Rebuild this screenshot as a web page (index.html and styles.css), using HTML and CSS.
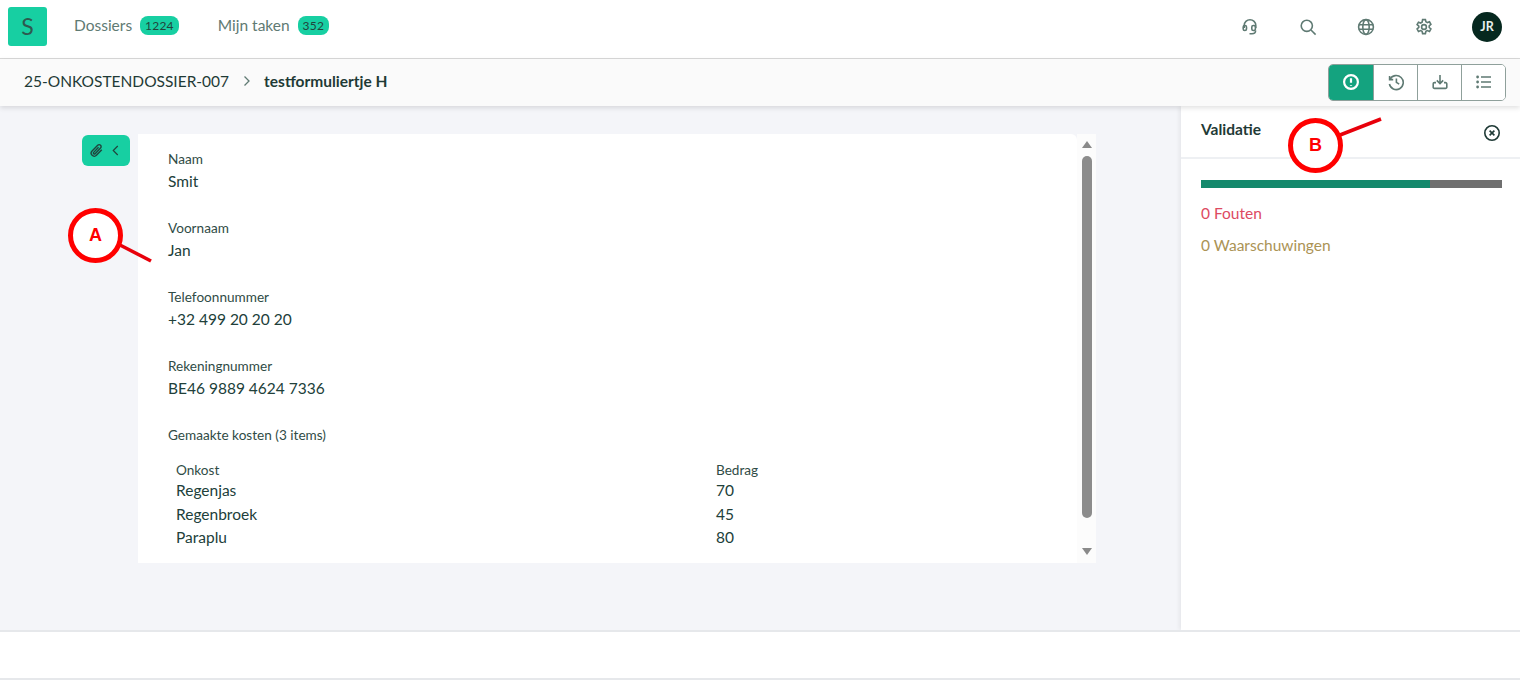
FILE: index.html
```html
<!DOCTYPE html>
<html lang="nl">
<head>
<meta charset="utf-8">
<title>testformuliertje H</title>
<link rel="stylesheet" href="styles.css">
</head>
<body>
<div class="app">
  <header class="topbar">
    <div class="logo">S</div>
    <nav class="nav">
      <a class="nav-item">Dossiers <span class="badge">1224</span></a>
      <a class="nav-item">Mijn taken <span class="badge">352</span></a>
    </nav>
    <div class="top-icons">
      <svg class="ticon" viewBox="0 0 18 18"><path d="M3.2 10V7.5a5.8 5.8 0 0 1 11.6 0V10"/><rect x="2.2" y="7.5" width="3.3" height="5" rx="1.6"/><rect x="10.8" y="7.5" width="3.6" height="5" rx="1.6"/><path d="M14.6 12.5c0 2.2-1.5 3.3-3.6 3.3H8.5"/></svg>
      <svg class="ticon" viewBox="0 0 18 18"><circle cx="7.8" cy="7.8" r="5.6"/><path d="M12 12l4.6 4.6"/></svg>
      <svg class="ticon" viewBox="0 0 18 18"><circle cx="9" cy="9" r="7.4"/><ellipse cx="9" cy="9" rx="3.2" ry="7.4"/><path d="M1.8 6.7h14.4M1.8 11.3h14.4"/></svg>
      <svg class="ticon" viewBox="0 0 18 18"><circle cx="9" cy="9" r="2.4"/><path d="M7.6 1.6h2.8l.5 2.2 1.5.8 2.1-.8 1.4 2.5-1.7 1.5v1.6l1.7 1.5-1.4 2.5-2.1-.8-1.5.8-.5 2.2H7.6l-.5-2.2-1.5-.8-2.1.8-1.4-2.5 1.7-1.5V8.2L2.1 6.7l1.4-2.5 2.1.8 1.5-.8z"/></svg>
      <div class="avatar">JR</div>
    </div>
  </header>

  <div class="subbar">
    <div class="crumbs">
      <span>25-ONKOSTENDOSSIER-007</span>
      <svg class="crumb-sep" viewBox="0 0 10 12"><path d="M2.5 1.5L7 6l-4.5 4.5"/></svg>
      <strong>testformuliertje H</strong>
    </div>
    <div class="tools">
      <button class="tool active"><svg viewBox="0 0 18 18"><circle cx="9" cy="9" r="6.9"/><path d="M9 5.2v4.6M9 12.1v.6"/></svg></button>
      <button class="tool"><svg viewBox="0 0 18 18"><path d="M2.6 3v3.6h3.6"/><path d="M3 6.4A7 7 0 1 1 2.4 11"/><path d="M9.4 5.4v4l2.8 1.7"/></svg></button>
      <button class="tool"><svg viewBox="0 0 18 18"><path d="M9 2v8.4M5.8 7.4L9 10.6l3.2-3.2"/><path d="M5 9.6H3.4a1.2 1.2 0 0 0-1.2 1.2v3.4a1.2 1.2 0 0 0 1.2 1.2h11.2a1.2 1.2 0 0 0 1.2-1.2v-3.4a1.2 1.2 0 0 0-1.2-1.2H13"/></svg></button>
      <button class="tool"><svg viewBox="0 0 18 18"><path d="M6 4h10M6 9h10M6 14h10"/><circle class="dot" cx="2.6" cy="4" r="1.4"/><circle class="dot" cx="2.6" cy="9" r="1.4"/><circle class="dot" cx="2.6" cy="14" r="1.4"/></svg></button>
    </div>
  </div>

  <div class="workspace">
    <main class="canvas">
      <button class="attach">
        <svg viewBox="0 0 16 16" class="clip"><path d="M13.6 7.2l-5.7 5.9a3.2 3.2 0 0 1-4.6-4.5l6-6.2a2.1 2.1 0 0 1 3 3l-5.8 6a1 1 0 0 1-1.5-1.4l5.2-5.4"/></svg>
        <svg viewBox="0 0 10 14" class="chev"><path d="M7.5 2L2.5 7l5 5"/></svg>
      </button>
      <div class="sheet">
        <div class="form">
          <div class="field"><div class="label">Naam</div><div class="value">Smit</div></div>
          <div class="field"><div class="label">Voornaam</div><div class="value">Jan</div></div>
          <div class="field"><div class="label">Telefoonnummer</div><div class="value">+32 499 20 20 20</div></div>
          <div class="field"><div class="label">Rekeningnummer</div><div class="value">BE46 9889 4624 7336</div></div>
          <div class="label group-label">Gemaakte kosten (3 items)</div>
          <div class="costs">
            <div class="label">Onkost</div><div class="label">Bedrag</div>
            <div class="value">Regenjas</div><div class="value">70</div>
            <div class="value">Regenbroek</div><div class="value">45</div>
            <div class="value">Paraplu</div><div class="value">80</div>
          </div>
        </div>
        <div class="scrollbar">
          <span class="arrow up"></span>
          <span class="thumb"></span>
          <span class="arrow down"></span>
        </div>
      </div>
    </main>
    <aside class="panel">
      <div class="panel-head">
        <h2>Validatie</h2>
        <svg class="close" viewBox="0 0 18 18"><circle cx="9" cy="9" r="7.2"/><path d="M6.6 6.6l4.8 4.8M11.4 6.6l-4.8 4.8"/></svg>
      </div>
      <div class="panel-body">
        <div class="progress"><div class="progress-fill"></div></div>
        <div class="errors">0 Fouten</div>
        <div class="warnings">0 Waarschuwingen</div>
      </div>
    </aside>
  </div>
  <footer class="footer"></footer>

  <div class="callout callout-a">A</div>
  <div class="callout callout-b">B</div>
  <svg class="callout-lines" viewBox="0 0 1520 680">
    <path d="M120 245L151 261"/>
    <path d="M1340 135L1381 119"/>
  </svg>
</div>
</body>
</html>
```

FILE: styles.css
```css
* { box-sizing: border-box; }
html, body { margin: 0; height: 100%; }
body { font-family: Lato, "Liberation Sans", sans-serif; color: #1f3a36; background: #fff; overflow: hidden; }

.app { position: relative; width: 1520px; height: 680px; display: flex; flex-direction: column; }

.topbar { height: 59px; flex: none; display: flex; align-items: center; padding: 0 18px 6px 8px; border-bottom: 1px solid #d9d9d9; background: #fff; }
.logo { width: 39px; height: 39px; background: #17cfa2; border-radius: 3px; display: flex; align-items: center; justify-content: center; font-size: 23px; color: #2d5a4f; }
.nav { display: flex; gap: 39px; margin: 0 0 2px 27px; }
.nav-item { display: flex; align-items: center; gap: 8px; font-size: 15.5px; color: #5f7a73; }
.badge { background: #17cfa2; color: #21443c; font-size: 12px; height: 19px; border-radius: 8px; padding: 0 5px; display: flex; align-items: center; letter-spacing: .2px; margin-top: 1px; }
.top-icons { margin-left: auto; display: flex; align-items: center; margin-top: 1px; }
.ticon { width: 18px; height: 18px; margin-right: 40px; fill: none; stroke: #5f7a73; stroke-width: 1.6; }
.avatar { width: 30px; height: 30px; border-radius: 50%; background: #06281f; color: #e8efed; font-size: 12.5px; font-weight: 700; display: flex; align-items: center; justify-content: center; margin-left: -1px; }

.subbar { height: 47px; flex: none; display: flex; align-items: center; justify-content: space-between; padding: 0 14px 1px 24px; background: #fafafa; box-shadow: 0 2px 5px rgba(0,0,0,.12); position: relative; z-index: 2; }
.crumbs { display: flex; align-items: center; font-size: 15.5px; color: #1f3a36; margin-bottom: 2px; }
.crumbs strong { font-weight: 700; font-size: 15.5px; }
.crumb-sep { width: 10px; height: 12px; margin: 0 12px 0 13px; fill: none; stroke: #5f7a73; stroke-width: 1.3; }
.tools { display: flex; height: 37px; border: 1px solid #8fa09b; border-radius: 5px; overflow: hidden; background: #fff; }
.tool { width: 44px; padding: 0; border: 0; border-left: 1px solid #8fa09b; background: #fff; display: flex; align-items: center; justify-content: center; }
.tool:first-child { border-left: 0; }
.tool svg { width: 18px; height: 18px; fill: none; stroke: #5f7a73; stroke-width: 1.6; }
.tool .dot { fill: #5f7a73; stroke: none; }
.tool.active { background: #14a37f; }
.tool.active svg { stroke: #fff; stroke-width: 2.2; }

.workspace { flex: 1; display: flex; min-height: 0; }
.canvas { flex: 1; background: #f4f5f9; display: flex; align-items: flex-start; padding: 28px 0 0 82px; }
.attach { width: 48px; height: 31px; padding: 0 10px 0 7px; border: 0; border-radius: 6px; background: #17cfa2; display: flex; align-items: center; justify-content: space-between; margin-top: 1px; }
.clip { width: 15px; height: 15px; fill: none; stroke: #21443c; stroke-width: 1.5; }
.chev { width: 9px; height: 13px; fill: none; stroke: #21443c; stroke-width: 1.3; }
.sheet { width: 958px; height: 429px; margin-left: 8px; display: flex; }
.form { flex: 1; background: #fff; border-radius: 0 6px 0 0; padding: 15px 30px 0; }
.field { height: 69px; }
.label { font-size: 13.6px; line-height: 20px; color: #304c46; }
.value { font-size: 15.5px; line-height: 24px; color: #21403a; }
.costs { display: grid; grid-template-columns: 540px 1fr; grid-template-rows: 18px repeat(3, 23.5px); margin: 16px 0 0 8px; }
.costs .label { line-height: 19px; }
.costs .value { line-height: 23.5px; }
.scrollbar { width: 19px; background: #fcfcfc; display: flex; flex-direction: column; align-items: center; padding-top: 7px; }
.arrow { width: 0; height: 0; border-left: 5px solid transparent; border-right: 5px solid transparent; }
.arrow.up { border-bottom: 7px solid #8a8a8a; }
.arrow.down { border-top: 7px solid #8a8a8a; margin-top: 30px; }
.thumb { width: 10px; height: 362px; background: #8c8c8c; border-radius: 5px; margin-top: 8px; }

.panel { width: 339px; flex: none; background: #fff; box-shadow: -2px 0 4px rgba(0,0,0,.06); position: relative; }
.panel-head { height: 53px; display: flex; align-items: flex-start; justify-content: space-between; padding: 14px 19px 0 20px; border-bottom: 2px solid #eef0f3; }
.panel-head h2 { margin: 0; font-size: 15.5px; line-height: 18px; font-weight: 700; color: #1f3a36; }
.close { width: 18px; height: 18px; margin-top: 4px; fill: none; stroke: #1f3a36; stroke-width: 1.6; }
.panel-body { padding: 21px 18px 0 20px; }
.progress { height: 8px; background: #6f6f6f; }
.progress-fill { width: 76%; height: 100%; background: #14896c; }
.errors { margin-top: 14px; font-size: 15.5px; line-height: 22px; color: #dd4a62; }
.warnings { margin-top: 10px; font-size: 15.5px; line-height: 22px; color: #ab9355; }

.footer { height: 50px; flex: none; border-top: 2px solid #e6e8eb; border-bottom: 2px solid #e6e8eb; background: #fff; position: relative; z-index: 1; }

.callout { position: absolute; z-index: 5; width: 55px; height: 55px; border: 5px solid #f00; border-radius: 50%; background: #fff; color: #f00; font: 700 18px "Liberation Sans", Arial, sans-serif; display: flex; align-items: center; justify-content: center; }
.callout-a { left: 68px; top: 208px; }
.callout-b { left: 1288px; top: 118px; }
.callout-lines { position: absolute; z-index: 4; left: 0; top: 0; width: 1520px; height: 680px; fill: none; stroke: #e8000b; stroke-width: 3.5; pointer-events: none; }
```
